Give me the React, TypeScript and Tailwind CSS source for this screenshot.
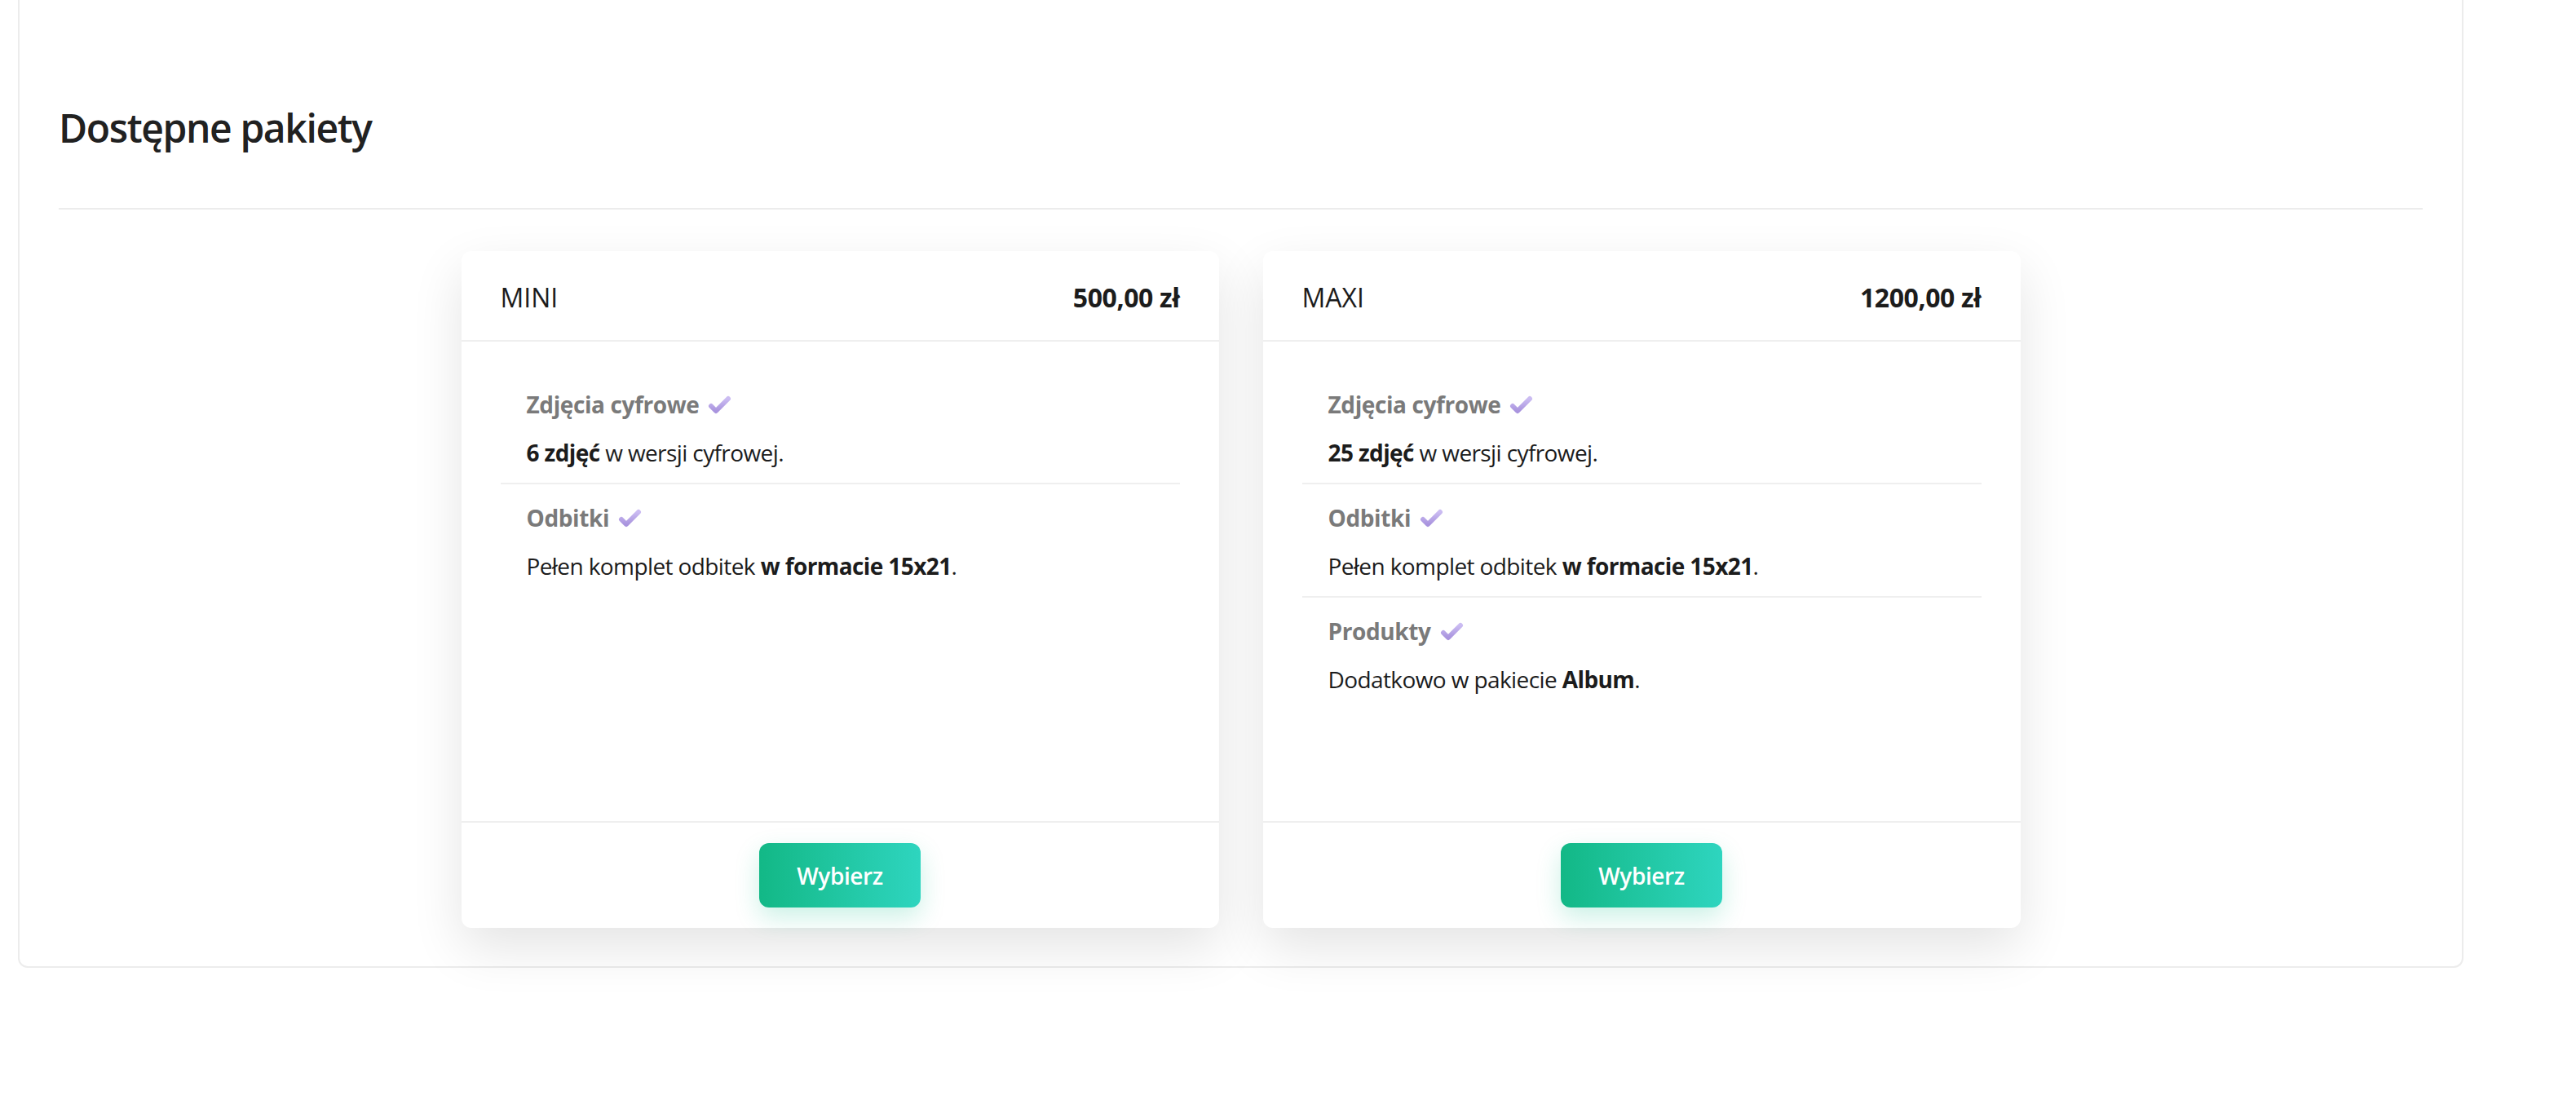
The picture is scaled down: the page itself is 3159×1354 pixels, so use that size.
import React from 'react';

type Feature = {
    title: string;
    desc: React.ReactNode;
};

type Pkg = {
    name: string;
    price: string;
    features: Feature[];
};

const PACKAGES: Pkg[] = [
    {
        name: 'MINI',
        price: '500,00 zł',
        features: [
            { title: 'Zdjęcia cyfrowe', desc: <><b className="font-bold">6 zdjęć</b> w wersji cyfrowej.</> },
            { title: 'Odbitki', desc: <>Pełen komplet odbitek <b className="font-bold">w formacie 15x21</b>.</> },
        ],
    },
    {
        name: 'MAXI',
        price: '1200,00 zł',
        features: [
            { title: 'Zdjęcia cyfrowe', desc: <><b className="font-bold">25 zdjęć</b> w wersji cyfrowej.</> },
            { title: 'Odbitki', desc: <>Pełen komplet odbitek <b className="font-bold">w formacie 15x21</b>.</> },
            { title: 'Produkty', desc: <>Dodatkowo w pakiecie <b className="font-bold">Album</b>.</> },
        ],
    },
];

const CheckIcon = () => (
    <svg width="30" height="24" viewBox="0 0 30 24" className="shrink-0">
        <defs>
            <linearGradient id="chk" x1="0" y1="0" x2="0" y2="1">
                <stop offset="0" stopColor="#cbbcf2" />
                <stop offset="1" stopColor="#a994de" />
            </linearGradient>
        </defs>
        <path d="M5 14 L11 20 L26 5" fill="none" stroke="url(#chk)" strokeWidth="6" strokeLinecap="round" strokeLinejoin="round" />
    </svg>
);

const PackageCard = ({ pkg }: { pkg: Pkg }) => (
    <div className="w-[929px] h-[830px] rounded-[12px] bg-white flex flex-col shadow-[0_24px_64px_rgba(0,0,0,0.11)]">
        <div className="h-[111px] flex items-center justify-between px-[48px] pt-[4px] border-b-2 border-[#efefef] text-[32px] text-[#1c1c1c] tracking-normal">
            <span>{pkg.name}</span>
            <span className="font-bold tracking-[-0.4px]">{pkg.price}</span>
        </div>
        <div className="flex-1 mx-[48px] pt-[36px]">
            {pkg.features.map((f) => (
                <div key={f.title} className="px-[32px] pt-[21px] pb-[17px] border-b-2 border-[#efefef] last:border-b-0">
                    <div className="flex items-center gap-[10px] h-[40px] text-[28px] font-bold text-[#7a7a7a] tracking-[-0.4px]">
                        <span>{f.title}</span>
                        <CheckIcon />
                    </div>
                    <p className="mt-[19px] h-[40px] leading-[40px] text-[28px] text-[#1c1c1c] tracking-[-0.6px]">{f.desc}</p>
                </div>
            ))}
        </div>
        <div className="h-[131px] border-t-2 border-[#efefef] flex items-center justify-center">
            <button className="w-[198px] h-[79px] rounded-[12px] bg-gradient-to-r from-[#12b886] to-[#2ed5bf] text-white text-[28px] font-semibold tracking-[-0.4px] shadow-[0_12px_30px_rgba(20,190,140,0.22)]">
                Wybierz
            </button>
        </div>
    </div>
);

export default function App() {
    return (
        <div className="min-h-screen w-full bg-white font-['Open_Sans',sans-serif]">
            <div className="ml-[22px] w-[2999px] border-x-2 border-b-2 border-[#ececec] rounded-b-[12px] px-[48px] pt-[128px] pb-[47px]">
                <h2 className="text-[48px] leading-[58px] font-semibold text-[#212121] tracking-[-1.4px]">Dostępne pakiety</h2>
                <div className="mt-[69px] h-[2px] bg-[#ececec]" />
                <div className="mt-[51px] flex justify-center gap-[54px]">
                    {PACKAGES.map((p) => (
                        <PackageCard key={p.name} pkg={p} />
                    ))}
                </div>
            </div>
        </div>
    );
}
